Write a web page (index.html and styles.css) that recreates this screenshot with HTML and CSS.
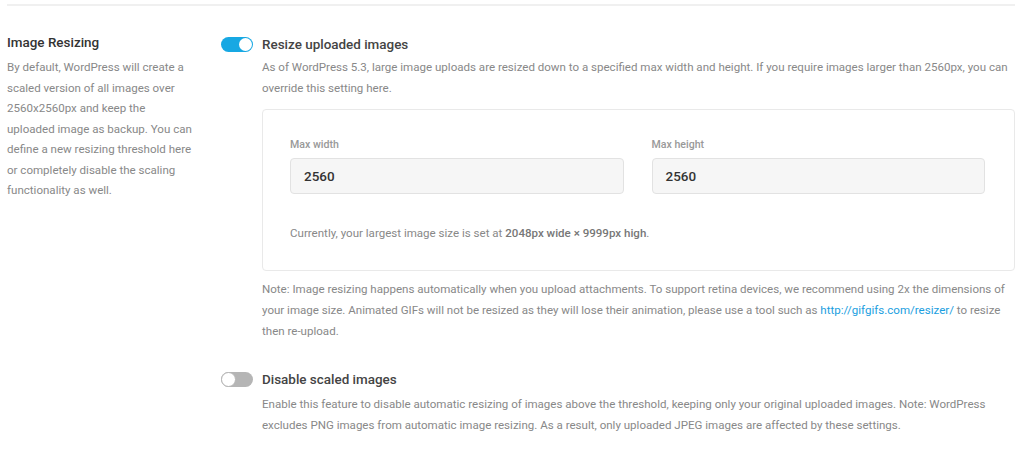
FILE: index.html
```html
<!DOCTYPE html>
<html>
<head>
<meta charset="utf-8">
<link rel="stylesheet" href="styles.css">
</head>
<body>
<div class="page">
  <div class="rule"></div>
  <section class="setting">
    <div class="side">
      <h3 class="side-title">Image Resizing</h3>
      <p class="side-desc">By default, WordPress will create a scaled version of all images over 2560x2560px and keep the uploaded image as backup. You can define a new resizing threshold here or completely disable the scaling functionality as well.</p>
    </div>
    <div class="main">
      <div class="opt">
        <span class="toggle on"><span class="knob"></span></span>
        <span class="opt-label">Resize uploaded images</span>
      </div>
      <p class="desc">As of WordPress 5.3, large image uploads are resized down to a specified max width and height. If you require images larger than 2560px, you can override this setting here.</p>
      <div class="box">
        <div class="fields">
          <div class="field">
            <label class="field-label">Max width</label>
            <div class="input">2560</div>
          </div>
          <div class="field">
            <label class="field-label">Max height</label>
            <div class="input">2560</div>
          </div>
        </div>
        <p class="current">Currently, your largest image size is set at <b>2048px wide × 9999px high</b>.</p>
      </div>
      <p class="desc note">Note: Image resizing happens automatically when you upload attachments. To support retina devices, we recommend using 2x the dimensions of your image size. Animated GIFs will not be resized as they will lose their animation, please use a tool such as <a href="#">http://gifgifs.com/resizer/</a> to resize then re-upload.</p>
      <div class="opt opt2">
        <span class="toggle off"><span class="knob"></span></span>
        <span class="opt-label">Disable scaled images</span>
      </div>
      <p class="desc desc2">Enable this feature to disable automatic resizing of images above the threshold, keeping only your original uploaded images. Note: WordPress excludes PNG images from automatic image resizing. As a result, only uploaded JPEG images are affected by these settings.</p>
    </div>
  </section>
</div>
</body>
</html>
```
FILE: styles.css
```css
html, body {
  margin: 0;
  padding: 0;
  background: #fff;
}
body {
  font-family: Roboto, "Liberation Sans", sans-serif;
  color: #888;
}
.page {
  padding: 4px 9px 0 7px;
}
.rule {
  height: 2px;
  background: #f0f0f0;
}
.setting {
  display: flex;
  gap: 26px;
  margin-top: 27px;
}
.side {
  width: 188px;
  flex: none;
}
.side-title {
  margin: 0;
  font-size: 13.45px;
  line-height: 20px;
  font-weight: 500;
  color: #333;
}
.side-desc {
  margin: 4px 0 0;
  font-size: 11.55px;
  line-height: 20.5px;
  color: #888;
}
.main {
  flex: 1;
  min-width: 0;
}
.opt {
  display: flex;
  align-items: center;
  gap: 9px;
  height: 20px;
  margin-top: 1px;
}
.toggle {
  position: relative;
  width: 32px;
  height: 15px;
  border-radius: 8px;
  flex: none;
  box-sizing: border-box;
}
.toggle.on {
  background: #17a8e3;
}
.toggle.off {
  background: #b5b5b5;
}
.knob {
  position: absolute;
  top: 1px;
  width: 13px;
  height: 13px;
  border-radius: 50%;
  background: #fff;
  box-sizing: border-box;
}
.toggle.on .knob {
  right: 1px;
}
.toggle.off .knob {
  border: 1px solid #b5b5b5;
  top: 0;
  left: 0;
  width: 15px;
  height: 15px;
}
.opt-label {
  font-size: 13.45px;
  font-weight: 500;
  color: #444;
}
.desc {
  margin: 3px 0 0 41px;
  font-size: 11.55px;
  line-height: 21px;
  color: #888;
}
.box {
  margin: 10px 0 0 41px;
  border: 1px solid #e9e9e9;
  border-radius: 4px;
  padding: 27px 29px 27px 27px;
}
.fields {
  display: grid;
  grid-template-columns: 1fr 1fr;
  gap: 28px;
}
.field-label {
  display: block;
  font-size: 10.6px;
  line-height: 16px;
  font-weight: 500;
  color: #999;
}
.input {
  margin-top: 5px;
  height: 36px;
  box-sizing: border-box;
  background: #f6f6f6;
  border: 1px solid #e2e2e2;
  border-radius: 4px;
  padding: 0 13px;
  display: flex;
  align-items: center;
  font-size: 13.45px;
  font-weight: 500;
  color: #333;
}
.current {
  margin: 29px 0 0;
  font-size: 11.55px;
  line-height: 20px;
  color: #888;
}
.current b {
  font-weight: 500;
  color: #777;
}
.note {
  margin-top: 8px;
}
.note a {
  color: #1a9ee0;
  text-decoration: none;
}
.opt2 {
  margin-top: 27px;
}
.desc2 {
  margin-top: 5px;
  line-height: 20.5px;
}
```
